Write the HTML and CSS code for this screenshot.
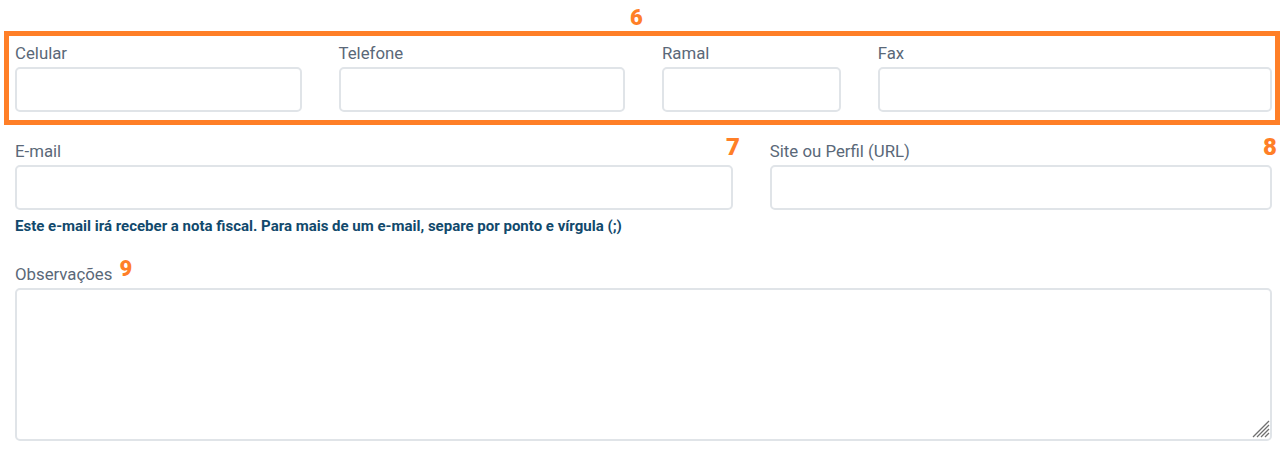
FILE: index.html
```html
<!DOCTYPE html>
<html lang="pt-BR">
	<head>
		<meta charset="UTF-8" />
		<meta name="viewport" content="width=device-width, initial-scale=1.0" />
		<title>Contato</title>
		<link rel="stylesheet" href="styles.css">
	</head>
	<body>
		<form class="form">
			<div class="mark-box">
				<span class="mark mark-6">6</span>
				<div class="row">
					<div class="field col-3">
						<label class="label">Celular</label>
						<input class="input" type="text" />
					</div>
					<div class="field col-3">
						<label class="label">Telefone</label>
						<input class="input" type="text" />
					</div>
					<div class="field col-2">
						<label class="label">Ramal</label>
						<input class="input" type="text" />
					</div>
					<div class="field col-4">
						<label class="label">Fax</label>
						<input class="input" type="text" />
					</div>
				</div>
			</div>

			<div class="row row-mail">
				<div class="field col-7">
					<label class="label">E-mail <span class="mark mark-end mark-7">7</span></label>
					<input class="input" type="email" />
					<p class="help">Este e-mail irá receber a nota fiscal. Para mais de um e-mail, separe por ponto e vírgula (;)</p>
				</div>
				<div class="field col-5">
					<label class="label">Site ou Perfil (URL) <span class="mark mark-end">8</span></label>
					<input class="input" type="text" />
				</div>
			</div>

			<div class="field field-obs">
				<label class="label">Observações <span class="mark mark-inline">9</span></label>
				<textarea class="input textarea"></textarea>
				<!-- alça de redimensionar -->
				<svg class="grip" width="18" height="18" viewBox="0 0 18 18">
					<g stroke="#6f6f6f" stroke-width="1.3">
						<line x1="1" y1="17" x2="17" y2="1" />
						<line x1="5" y1="17" x2="17" y2="5" />
						<line x1="9" y1="17" x2="17" y2="9" />
						<line x1="13" y1="17" x2="17" y2="13" />
					</g>
				</svg>
			</div>
		</form>
	</body>
</html>
```

FILE: styles.css
```css
* {
	margin: 0;
	padding: 0;
	box-sizing: border-box;
	font-family: Roboto, "Liberation Sans", sans-serif;
}

body {
	background: #fff;
}

.form {
	padding: 0 12px 0 15px;
}

/* moldura laranja de destaque */
.mark-box {
	position: relative;
	margin: 31px -8px 0 -11px;
	padding: 3px 3px 8px 6px;
	border: 5px solid #ff7f27;
}

.mark {
	color: #ff7f27;
	font-weight: 900;
	font-size: 22px;
	line-height: 22px;
}
.mark-6 {
	position: absolute;
	left: 621px;
	top: -29px;
}
.mark-end {
	position: absolute;
	right: -5px;
	top: -4px;
	font-size: 24px;
	line-height: 24px;
}
.mark-7 {
	right: -7px;
}
.mark-inline {
	position: relative;
	top: -4px;
	margin-left: 3px;
	font-size: 22px;
}

.row {
	display: grid;
	grid-template-columns: repeat(12, 1fr);
	column-gap: 37px;
}
.col-2 {
	grid-column: span 2;
}
.col-3 {
	grid-column: span 3;
}
.col-4 {
	grid-column: span 4;
}
.col-5 {
	grid-column: span 5;
}
.col-7 {
	grid-column: span 7;
}

.row-mail {
	margin-top: 12px;
}

.field {
	display: flex;
	flex-direction: column;
	position: relative;
}

.label {
	position: relative;
	display: block;
	font-size: 16.8px;
	line-height: 24px;
	color: #5a6878;
	margin: 2px 0 2px;
}

.input {
	display: block;
	width: 100%;
	height: 45px;
	border: 2px solid #e0e4e8;
	border-radius: 5px;
	background: #fff;
	outline: none;
}

.help {
	margin-top: 6px;
	font-size: 15px;
	line-height: 20px;
	font-weight: 700;
	color: #11496c;
}

.field-obs {
	margin-top: 24px;
}

.textarea {
	height: 153px;
	resize: none;
}

.grip {
	position: absolute;
	right: 2px;
	bottom: 3px;
}
```
